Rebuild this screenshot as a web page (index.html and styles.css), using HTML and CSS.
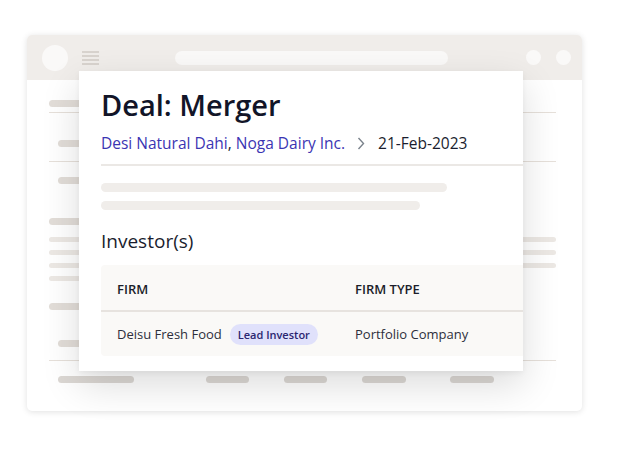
FILE: index.html
```html
<!DOCTYPE html>
<html lang="en">
<head>
<meta charset="utf-8">
<title>Deal: Merger</title>
<link rel="stylesheet" href="styles.css">
</head>
<body>
<div class="window">
  <div class="win-header">
    <span class="dot-lg"></span>
    <span class="burger"><i></i><i></i><i></i><i></i></span>
    <span class="address"></span>
    <span class="win-dots"><span class="dot-sm"></span><span class="dot-sm"></span></span>
  </div>
  <div class="win-body">
    <div class="bar dark a"></div>
    <div class="rule r1"></div>
    <div class="bar dark b indent"></div>
    <div class="rule r2"></div>
    <div class="bar dark c indent"></div>
    <div class="bar dark d"></div>
    <div class="bar light l1"></div>
    <div class="bar light l2"></div>
    <div class="bar light l3"></div>
    <div class="bar light l4"></div>
    <div class="bar dark e"></div>
    <div class="bar dark f indent"></div>
    <div class="rule r3"></div>
    <div class="foot-bars">
      <span class="fb fb1"></span><span class="fb fb2"></span><span class="fb fb3"></span><span class="fb fb4"></span><span class="fb fb5"></span>
    </div>
  </div>

  <div class="card">
    <h1 class="title">Deal: Merger</h1>
    <div class="crumbs">
      <span class="links"><a>Desi Natural Dahi</a>, <a>Noga Dairy Inc.</a></span>
      <svg class="chev" width="8" height="13" viewBox="0 0 8 13"><polyline points="1.5,1 6.5,6.5 1.5,12" fill="none" stroke="#7b838c" stroke-width="1.4"/></svg>
      <span class="date">21-Feb-2023</span>
    </div>
    <div class="divider"></div>
    <div class="ph ph1"></div>
    <div class="ph ph2"></div>
    <h2 class="section">Investor(s)</h2>
    <div class="table">
      <div class="trow thead">
        <div class="c1">FIRM</div>
        <div class="c2">FIRM TYPE</div>
      </div>
      <div class="trow tbody">
        <div class="c1">Deisu Fresh Food <span class="badge">Lead Investor</span></div>
        <div class="c2">Portfolio Company</div>
      </div>
    </div>
  </div>
</div>
</body>
</html>
```

FILE: styles.css
```css
* { box-sizing: border-box; }
html, body { margin: 0; padding: 0; background: #ffffff; }
body {
  font-family: "Open Sans", "Noto Sans", "Liberation Sans", sans-serif;
  width: 626px;
  height: 456px;
  overflow: hidden;
  padding: 35px 0 0 27px;
}

.window {
  position: relative;
  width: 555px;
  height: 376px;
  background: #ffffff;
  border-radius: 5px;
  box-shadow: 0 1px 6px rgba(0, 0, 0, 0.12);
}

.win-header {
  height: 45px;
  background: #f0edea;
  border-radius: 5px 5px 0 0;
  display: flex;
  align-items: center;
  padding: 0 11px 0 15px;
}
.dot-lg {
  width: 26px; height: 26px; border-radius: 50%;
  background: #faf9f8;
}
.burger {
  margin-left: 14px;
  width: 17px;
  display: flex; flex-direction: column; gap: 2px;
}
.burger i { display: block; height: 2px; background: #d8d3ce; }
.address {
  margin-left: 76px;
  width: 273px; height: 14px; border-radius: 7px;
  background: #faf9f8;
}
.win-dots { margin-left: auto; display: flex; gap: 15px; }
.dot-sm { width: 15px; height: 15px; border-radius: 50%; background: #faf9f8; }

.win-body {
  display: flex;
  flex-direction: column;
  padding: 0 26px 0 22px;
}
.bar { border-radius: 4px; }
.bar.dark { height: 7px; background: #e2ddd8; width: 110px; }
.bar.light { height: 5px; background: #ece8e4; }
.indent { margin-left: 9px; }
.rule { height: 1px; background: #e6e0da; }

.a { margin-top: 20px; }
.r1 { margin-top: 5px; }
.b { margin-top: 27px; }
.r2 { margin-top: 14px; }
.c { margin-top: 15px; }
.d { margin-top: 34px; }
.l1 { margin-top: 12px; }
.l2, .l3, .l4 { margin-top: 8px; }
.l4 { width: 300px; }
.e { margin-top: 22px; }
.f { margin-top: 30px; }
.r3 { margin-top: 13px; }

.foot-bars { margin-top: 15px; display: flex; padding-left: 9px; }
.fb { height: 7px; border-radius: 4px; background: #dcd8d4; }
.fb1 { width: 76px; }
.fb2 { width: 43px; margin-left: 72px; }
.fb3 { width: 43px; margin-left: 35px; }
.fb4 { width: 44px; margin-left: 35px; }
.fb5 { width: 44px; margin-left: 44px; }

.card {
  position: absolute;
  left: 52px;
  top: 36px;
  width: 444px;
  height: 300px;
  background: #ffffff;
  box-shadow: 0 14px 36px rgba(0, 0, 0, 0.14), 0 2px 6px rgba(0, 0, 0, 0.05);
  padding: 16px 0 0 22px;
  display: flex;
  flex-direction: column;
}
.title {
  margin: 0;
  font-size: 29px;
  line-height: 36px;
  font-weight: 600;
  color: #121528;
}
.crumbs {
  margin-top: 9px;
  display: flex;
  align-items: center;
  font-size: 15.5px;
  line-height: 22px;
}
.links { color: #1a1d2e; }
.links a { color: #3b35b3; text-decoration: none; }
.chev { margin-left: 12px; margin-right: 13px; }
.date { color: #1a1d2e; font-weight: 500; }
.divider {
  margin-top: 10px;
  height: 2px;
  background: #ebe8e5;
}
.ph { height: 9px; border-radius: 5px; background: #f0edea; }
.ph1 { margin-top: 17px; width: 346px; }
.ph2 { margin-top: 9px; width: 319px; }
.section {
  margin: 19px 0 0;
  font-size: 19px;
  line-height: 24px;
  font-weight: 500;
  color: #1a1d2e;
}
.table {
  margin-top: 12px;
  background: #faf9f7;
  border-radius: 4px 0 0 4px;
}
.trow { display: flex; align-items: center; padding-left: 16px; }
.thead {
  height: 47px;
  border-bottom: 2px solid #e7e3df;
  font-size: 13px;
  font-weight: 600;
  color: #1c1e2a;
  padding-top: 2px;
}
.tbody {
  height: 44px;
  font-size: 13px;
  color: #2d2f3b;
}
.c1 { width: 238px; display: flex; align-items: center; }
.badge {
  margin-left: 8px;
  height: 21px;
  padding: 0 8px;
  border-radius: 11px;
  background: #e0e1fb;
  color: #2b2670;
  font-size: 11px;
  font-weight: 600;
  display: inline-flex;
  align-items: center;
}
```
